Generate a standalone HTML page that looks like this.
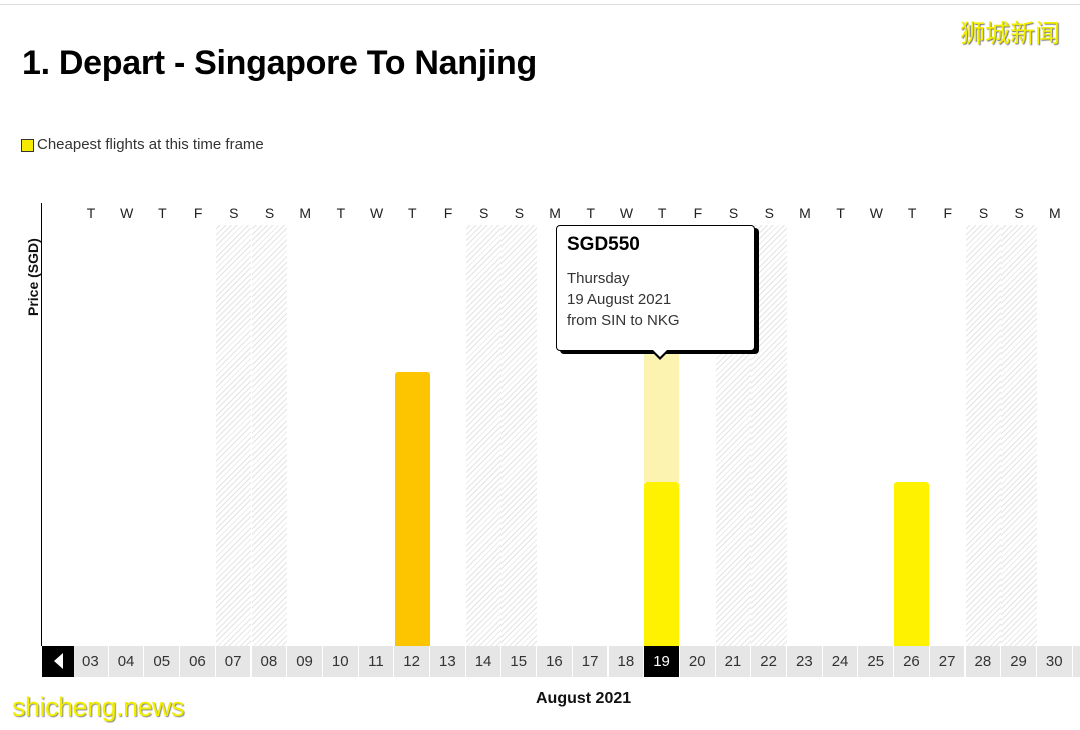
<!DOCTYPE html>
<html><head><meta charset="utf-8"><style>
*{margin:0;padding:0;box-sizing:border-box}
body{width:1080px;height:730px;background:#fff;position:relative;overflow:hidden;font-family:"Liberation Sans","DejaVu Sans",sans-serif;color:#111}
.a{position:absolute}
.hatch{background:repeating-linear-gradient(-45deg,#fff 0 3px,#e4e4e4 3px 4px)}
.day{position:absolute;top:205px;width:36px;text-align:center;font-size:14px;color:#222}
.cell{position:absolute;top:646px;height:31px;background:#e6e6e6;border-right:1px solid #fff;text-align:center;line-height:31px;font-size:15px;color:#333}
</style></head><body>
<div class="a" style="left:0;top:4px;width:1080px;height:1px;background:#ddd"></div>
<div class="a" style="left:960px;top:14px;font-family:'WenQuanYi Zen Hei','Noto Sans CJK SC',sans-serif;font-size:25px;color:#f2ee00;text-shadow:1px 1px 1px #777">狮城新闻</div>
<div class="a" style="left:22px;top:44px;font-size:34px;font-weight:bold;letter-spacing:-0.3px;color:#000">1. Depart - Singapore To Nanjing</div>
<div class="a" style="left:21px;top:139px;width:13px;height:13px;background:#f5ea00;border:1px solid #333"></div>
<div class="a" style="left:37px;top:136px;font-size:15px;color:#333">Cheapest flights at this time frame</div>
<div class="a" style="left:41px;top:203px;width:1px;height:443px;background:#000"></div>
<div class="a" style="left:25px;top:316px;transform:rotate(-90deg);transform-origin:0 0;font-size:14px;font-weight:bold;white-space:nowrap">Price (SGD)</div>
<div id="g"></div>
<div class="a" style="left:644px;top:350px;width:35px;height:132px;background:#fdf3b0"></div>
<div class="a" style="left:395px;top:372px;width:35px;height:274px;background:#fcc500;border-radius:3px 3px 0 0"></div>
<div class="a" style="left:644px;top:482px;width:35px;height:164px;background:#fff200;border-radius:3px 3px 0 0"></div>
<div class="a" style="left:894px;top:482px;width:35px;height:164px;background:#fff200;border-radius:3px 3px 0 0"></div>
<div class="a" style="left:42px;top:646px;width:32px;height:31px;background:#000"></div>
<div class="a" style="left:54px;top:653px;width:0;height:0;border-top:8px solid transparent;border-bottom:8px solid transparent;border-right:9px solid #fff"></div>
<div class="a" style="left:560px;top:228px;width:199px;height:126px;background:#000;border-radius:4px"></div>
<div class="a" style="left:556px;top:225px;width:199px;height:126px;background:#fff;border:1.5px solid #000;border-radius:4px;padding:8px 10px">
<div style="font-size:19px;font-weight:bold;color:#000">SGD550</div>
<div style="font-size:15px;color:#333;margin-top:12px;line-height:21px">Thursday<br>19 August 2021<br>from SIN to NKG</div></div>
<div class="a" style="left:650px;top:350px;width:0;height:0;border-left:10px solid transparent;border-right:10px solid transparent;border-top:10px solid #000"></div>
<div class="a" style="left:652px;top:349px;width:0;height:0;border-left:8px solid transparent;border-right:8px solid transparent;border-top:8px solid #fff"></div>
<div class="a" style="left:536px;top:690px;font-size:16px;font-weight:bold;color:#111">August 2021</div>
<div class="a" style="left:12px;top:692px;font-size:27px;color:#f2ee00;text-shadow:1px 1px 1px #888;letter-spacing:-0.5px">shicheng.news</div>
<script>
var g=document.getElementById('g'),h='',L='TWTFSSM';
for(var i=0;i<29;i++){var d=i+3,x=73+i*35.7;
h+='<div class="day" style="left:'+x+'px">'+L[i%7]+'</div>';
if(i%7==4||i%7==5)h+='<div class="a hatch" style="left:'+x+'px;top:225px;width:35.7px;height:421px"></div>';
if(d<=31){var s=d==19?'background:#000;color:#fff;':'';
h+='<div class="cell" style="left:'+x+'px;width:35.7px;'+s+'">'+(d<10?'0':'')+d+'</div>';}}
h+='<div class="a" style="left:645px;top:636px;width:0;height:0;border-left:17px solid transparent;border-right:17px solid transparent;border-bottom:10px solid #000"></div>';
g.innerHTML=h;
</script>
</body></html>
